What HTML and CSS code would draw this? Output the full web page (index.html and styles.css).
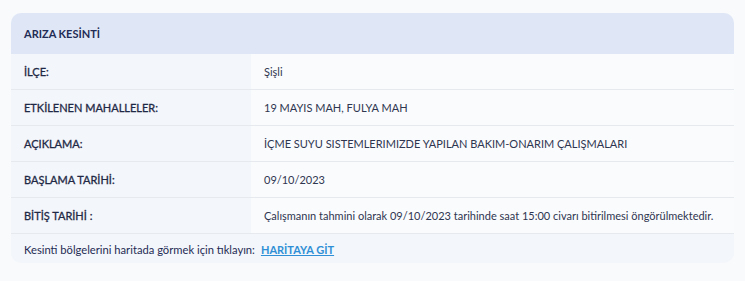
FILE: index.html
```html
<!DOCTYPE html>
<html lang="tr">
<head>
<meta charset="utf-8">
<link rel="stylesheet" href="styles.css">
</head>
<body>
<div class="card">
  <div class="card-header">ARIZA KESİNTİ</div>
  <div class="row"><div class="label">İLÇE:</div><div class="value">Şişli</div></div>
  <div class="row"><div class="label">ETKİLENEN MAHALLELER:</div><div class="value">19 MAYIS MAH, FULYA MAH</div></div>
  <div class="row"><div class="label">AÇIKLAMA:</div><div class="value">İÇME SUYU SISTEMLERIMIZDE YAPILAN BAKIM-ONARIM ÇALIŞMALARI</div></div>
  <div class="row"><div class="label">BAŞLAMA TARİHİ:</div><div class="value">09/10/2023</div></div>
  <div class="row"><div class="label">BİTİŞ TARİHİ :</div><div class="value">Çalışmanın tahmini olarak 09/10/2023 tarihinde saat 15:00 civarı bitirilmesi öngörülmektedir.</div></div>
  <div class="card-footer"><span>Kesinti bölgelerini haritada görmek için tıklayın:</span><a href="#" class="map-link">HARİTAYA GİT</a></div>
</div>
</body>
</html>
```
FILE: styles.css
```css
html, body { margin: 0; padding: 0; }
body {
  background: #f9fafc;
  font-family: "Lato", "Noto Sans", sans-serif;
  color: #2a3350;
  padding: 13px 11px 18px 11px;
}
.card {
  background: #f3f6fa;
  border-radius: 10px;
  overflow: hidden;
}
.card-header {
  background: #dfe7f6;
  height: 41px;
  display: flex;
  align-items: center;
  padding-left: 13px;
  font-size: 11px;
  font-weight: 700;
  color: #1f2c55;
}
.row {
  display: grid;
  grid-template-columns: 240px 1fr;
  height: 35px;
  border-bottom: 1px solid #e6e9ee;
  font-size: 11px;
}
.row .label {
  display: flex;
  align-items: center;
  padding-left: 13px;
  font-weight: 400;
  color: #1f2946;
  -webkit-text-stroke: 0.3px #1f2946;
}
.row .value {
  display: flex;
  align-items: center;
  padding-left: 13px;
  background: #fafbfd;
  color: #2f3650;
}
.card-footer {
  height: 29px;
  box-sizing: border-box;
  padding-top: 2px;
  display: flex;
  align-items: center;
  gap: 6px;
  padding-left: 13px;
  font-size: 11.2px;
  color: #1f2c55;
}
.map-link {
  color: #2f8fd6;
  font-weight: 700;
  font-size: 11px;
  text-decoration: underline;
}
```
